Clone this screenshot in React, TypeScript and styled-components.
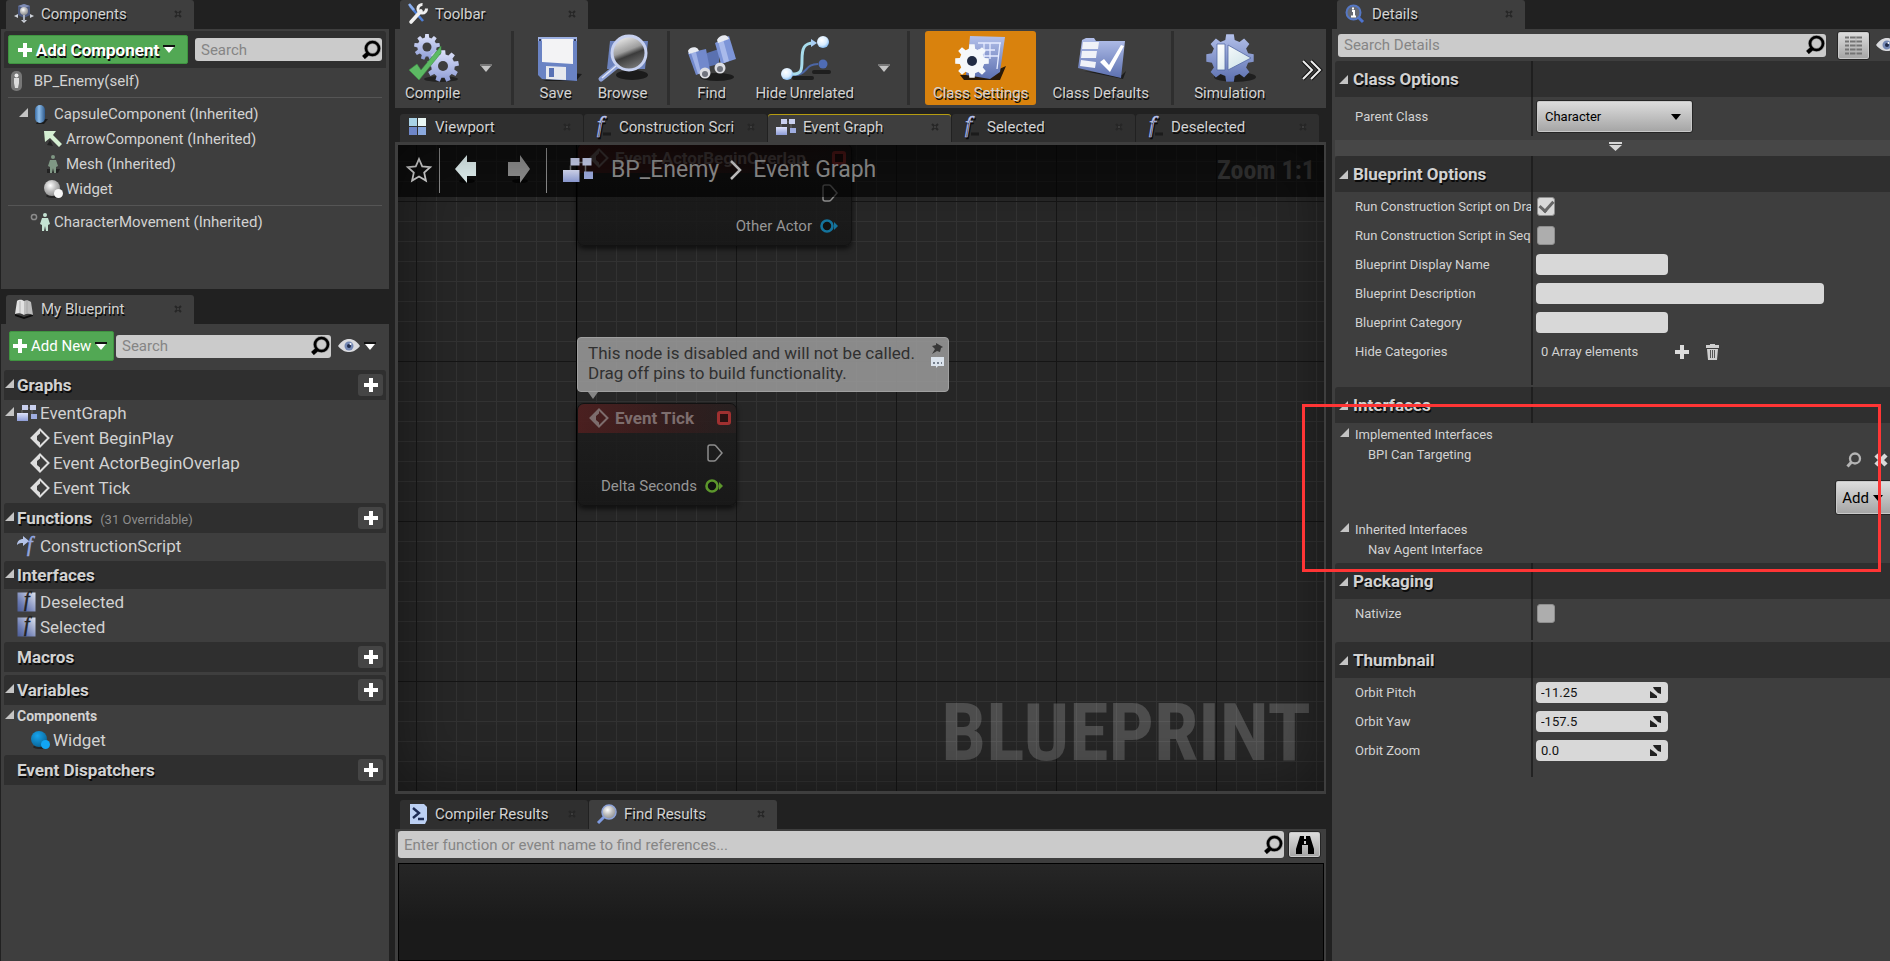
import React from 'react';
import styled, { createGlobalStyle, css } from 'styled-components';

const Global = createGlobalStyle`
  * { box-sizing: border-box; }
  body { margin: 0; background: #212121; color: #d2d2d2; overflow: hidden;
    font: 15px/20px Roboto, "Liberation Sans", sans-serif; }
  button, input, select { font: inherit; color: inherit; margin: 0; border: 0; padding: 0; background: none; outline: none; }
  ul { list-style: none; margin: 0; padding: 0; }
  h2, h3 { margin: 0; font: inherit; }
  svg { display: block; flex: none; overflow: visible; }
`;

const shadow = css`text-shadow: 1px 2px 0 #0a0a0a;`;

/* ---------- layout ---------- */

const Editor = styled.main`
  display: grid;
  grid-template-columns: 388px minmax(0, 1fr) 558px;
  column-gap: 6px;
  height: 100vh;
  padding-left: 1px;
  overflow: hidden;
`;
const Column = styled.div`
  display: flex;
  flex-direction: column;
  min-width: 0;
  min-height: 0;
`;
const Panel = styled.section<{ $grow?: boolean }>`
  background: #3e3e3e;
  padding: 0 3px;
  ${(p) => p.$grow && 'flex: 1;'}
`;
const ComponentsPanel = styled(Panel)`
  height: 260px;
  padding-top: 2px;
  margin-bottom: 6px;
`;

/* ---------- tabs ---------- */

const TabStrip = styled.div`
  display: flex;
  flex: none;
  gap: 1px;
  padding: 0 5px;
  background: #212121;
`;
const BottomStrip = styled(TabStrip)`
  margin-top: 6px;
`;
const TabButton = styled.button<{ $dim?: boolean; $marked?: boolean; $doc?: boolean }>`
  display: flex;
  align-items: center;
  gap: 7px;
  width: ${(p) => (p.$doc ? 183 : 188)}px;
  height: ${(p) => (p.$doc ? 28 : 29)}px;
  padding: 0 12px 2px 8px;
  border-radius: 3px 3px 0 0;
  background: ${(p) => (p.$dim ? '#2f2f2f' : '#3e3e3e')};
  ${(p) => p.$marked && 'box-shadow: inset 0 1px 0 #b59c10;'}
  text-align: left;
  ${shadow}
`;
const TabLabel = styled.span`
  flex: 1;
  min-width: 0;
  white-space: nowrap;
`;

/* ---------- shared controls ---------- */

const SearchBox = styled.label<{ $tall?: boolean }>`
  display: flex;
  align-items: center;
  flex: 1;
  min-width: 0;
  height: ${(p) => (p.$tall ? 27 : 23)}px;
  padding: 0 1px 0 6px;
  border-radius: 3px;
  background: #cbcbcb;
  input { flex: 1; min-width: 0; color: #111; }
  input::placeholder { color: #858585; opacity: 1; }
`;
const GreenButton = styled.button<{ $wide?: boolean }>`
  display: flex;
  align-items: center;
  justify-content: ${(p) => (p.$wide ? 'center' : 'space-between')};
  gap: 4px;
  flex: none;
  width: ${(p) => (p.$wide ? 180 : 105)}px;
  height: ${(p) => (p.$wide ? 29 : 30)}px;
  padding: 0 6px 0 3px;
  border: 1px solid #3f9440;
  border-radius: 2px;
  background: #52a854;
  color: #fff;
  white-space: nowrap;
  ${(p) => p.$wide && css`font-size: 17px; font-weight: 700; ${shadow}`}
`;
const GreyButton = styled.button<{ $short?: boolean }>`
  display: flex;
  align-items: center;
  justify-content: center;
  flex: none;
  width: 33px;
  height: ${(p) => (p.$short ? 27 : 29)}px;
  border: 1px solid #252525;
  border-radius: 3px;
  background: linear-gradient(#dedede, #a4a4a4);
  box-shadow: inset 0 0 0 1px #c9c9c9;
  color: #000;
`;
const IconButton = styled.button`
  display: flex;
  align-items: center;
  justify-content: center;
  flex: none;
`;

/* ---------- left column ---------- */

const AddBar = styled.div`
  display: flex;
  align-items: center;
  gap: 7px;
  height: 37px;
  padding: 0 4px;
  border-radius: 3px 3px 0 0;
  background: #2f2f2f;
`;
const BlueprintBar = styled.div`
  display: flex;
  align-items: center;
  gap: 2px;
  padding: 7px 10px 9px 5px;
`;
const EyeMenu = styled(IconButton)`
  gap: 4px;
  padding-left: 5px;
`;
const Rule = styled.li`
  height: 1px;
  margin: 4px 4px 3px;
  background: #555;
`;
const Row = styled.li<{ $indent: number; $large?: boolean; $bold?: boolean }>`
  display: flex;
  align-items: center;
  gap: 3px;
  height: ${(p) => (p.$bold ? 22 : 25)}px;
  padding-left: ${(p) => p.$indent}px;
  white-space: nowrap;
  ${(p) => p.$large && 'font-size: 17px;'}
  ${(p) => p.$bold && 'font-size: 14px; font-weight: 700; gap: 0;'}
`;
const Caret = styled.span`
  width: 12px;
  flex: none;
  padding-bottom: 3px;
`;
const RowCaret = styled(Caret)`
  margin-right: -3px;
`;
const GroupHead = styled.header<{ $short?: boolean }>`
  display: flex;
  align-items: center;
  height: ${(p) => (p.$short ? 28 : 30)}px;
  padding: 0 3px 0 1px;
  border-radius: 3px 3px 0 0;
  background: #2f2f2f;
  h3 { font-size: 17px; font-weight: 700; ${shadow} }
  h3:first-child { margin-left: 12px; }
  small { flex: 1; padding: 3px 0 0 8px; font-size: 13px; color: #8d8d8d; }
`;
const AddButton = styled(IconButton)`
  width: 25px;
  height: 22px;
  margin-left: auto;
  border-radius: 3px;
  background: #454545;
`;
const Group = styled.section`
  margin-bottom: 3px;
`;

/* ---------- toolbar ---------- */

const ToolbarBox = styled.div`
  display: flex;
  flex: none;
  height: 79px;
  padding-top: 2px;
  margin-bottom: 6px;
  background: #3e3e3e;
`;
const ToolGroup = styled.div<{ $start: number; $end?: number; $gap?: number }>`
  display: flex;
  height: 74px;
  gap: ${(p) => p.$gap ?? 0}px;
  padding: 0 ${(p) => p.$end ?? 0}px 0 ${(p) => p.$start}px;
  & + & { border-left: 3px solid #2e2e2e; }
`;
const ToolButton = styled.button<{ $active?: boolean; $wide?: boolean }>`
  display: flex;
  flex-direction: column;
  align-items: center;
  min-width: ${(p) => (p.$wide ? 111 : 67)}px;
  padding: 2px 6px 0;
  border-radius: 3px;
  line-height: 20px;
  white-space: nowrap;
  background: ${(p) => (p.$active ? '#d9820d' : 'none')};
  ${shadow}
`;
const ToolCaret = styled(IconButton)`
  width: 40px;
`;
const MoreButton = styled(IconButton)`
  width: 28px;
  margin-left: auto;
`;

/* ---------- graph ---------- */

const GraphFrame = styled.section`
  flex: 1;
  min-height: 0;
  display: flex;
  padding: 3px 2px 3px 3px;
  background: #3e3e3e;
`;
const Canvas = styled.div`
  position: relative;
  flex: 1;
  overflow: hidden;
  background:
    linear-gradient(#000, #000) 178px 0 / 1px 100% no-repeat,
    linear-gradient(90deg, #151515 1px, transparent 1px) 18px 56px / 160px 160px,
    linear-gradient(#151515 1px, transparent 1px) 18px 56px / 160px 160px,
    linear-gradient(90deg, #323232 1px, transparent 1px) 18px 16px / 20px 20px,
    linear-gradient(#323232 1px, transparent 1px) 18px 16px / 20px 20px,
    #262626;
  &::after {
    content: '';
    position: absolute;
    inset: 0;
    box-shadow: inset 0 0 60px rgba(0, 0, 0, 0.45);
    pointer-events: none;
  }
`;
const GraphTitle = styled.header`
  position: absolute;
  inset: 0 0 auto 0;
  display: flex;
  align-items: center;
  height: 52px;
  padding: 0 9px 2px;
  background: rgba(0, 0, 0, 0.62);
  font-size: 23px;
  color: #8c8c8c;
`;
const TitleRule = styled.span`
  width: 1px;
  height: 45px;
  background: #8a8a8a;
`;
const StarButton = styled(IconButton)`
  width: 24px;
  margin-right: 8px;
`;
const NavButton = styled(IconButton)`
  width: 53px;
  padding-right: 2px;
`;
const Crumbs = styled.nav`
  display: flex;
  align-items: center;
  gap: 11px;
  padding-left: 16px;
  svg:first-child { margin-right: 7px; }
`;
const ZoomText = styled.span`
  margin-left: auto;
  font: 700 26px/32px "Roboto Condensed", Roboto, sans-serif;
  color: #303030;
`;
const Watermark = styled.span`
  position: absolute;
  right: 13px;
  bottom: 18px;
  font: 700 80px/80px "Roboto Condensed", Roboto, sans-serif;
  color: rgba(255, 255, 255, 0.18);
`;
const Node = styled.article<{ $x: number; $y: number; $w: number }>`
  position: absolute;
  left: ${(p) => p.$x}px;
  top: ${(p) => p.$y}px;
  width: ${(p) => p.$w}px;
  height: 103px;
  border: 1px solid #121212;
  border-radius: 7px;
  background: linear-gradient(rgba(30, 30, 30, 0.85), rgba(22, 22, 22, 0.85));
  box-shadow: 0 3px 5px rgba(0, 0, 0, 0.6);
  color: #969696;
  overflow: hidden;
`;
const NodeHead = styled.header`
  display: flex;
  align-items: center;
  gap: 6px;
  height: 29px;
  padding: 0 5px 2px 11px;
  background: linear-gradient(90deg, rgba(104, 32, 32, 0.6), rgba(80, 28, 28, 0.4) 60%, rgba(50, 34, 34, 0.4));
  font-size: 17px;
  font-weight: 700;
  color: #7d6d6d;
  svg:last-child { margin-left: auto; }
`;
const NodePin = styled.div`
  display: flex;
  align-items: center;
  justify-content: flex-end;
  gap: 8px;
  height: 33px;
  margin-top: 3px;
  padding-right: 13px;
  & + & { margin-top: 0; }
`;
const Comment = styled.p`
  position: absolute;
  left: 179px;
  top: 192px;
  display: flex;
  justify-content: space-between;
  width: 372px;
  height: 55px;
  margin: 0;
  padding: 5px 4px 0 10px;
  border-radius: 4px;
  border: 1px solid #a0a0a0;
  background: rgba(150, 150, 150, 0.9);
  font-size: 17px;
  color: #303030;
  &::after {
    content: '';
    position: absolute;
    left: 10px;
    top: 54px;
    border: 5px solid transparent;
    border-top: 7px solid #868686;
    border-bottom: 0;
  }
`;
const CommentIcons = styled.span`
  display: grid;
  gap: 2px;
  align-content: start;
`;

/* ---------- find results ---------- */

const ResultsPanel = styled.section`
  display: flex;
  flex-direction: column;
  flex: none;
  height: 132px;
  padding: 2px 2px 0 3px;
  background: #3e3e3e;
`;
const ResultsBar = styled.div`
  display: flex;
  gap: 4px;
  padding-right: 3px;
  margin-bottom: 5px;
`;
const ResultsList = styled.div`
  flex: 1;
  border: 1px solid #000;
  background: linear-gradient(#262626, #1a1a1a 60%);
`;

/* ---------- details ---------- */

const DetailsPanel = styled(Panel)`
  padding-right: 0;
`;
const DetailsBar = styled.div`
  display: flex;
  align-items: center;
  height: 32px;
  padding-left: 3px;
  gap: 6px;
  label { margin-right: 5px; }
`;
const EyeButton = styled(IconButton)`
  margin-right: -8px;
`;
const Section = styled.section<{ $full?: boolean; $gap?: number }>`
  margin-bottom: ${(p) => p.$gap ?? 2}px;
  background: linear-gradient(#232323, #232323) 196px 0 / 2px ${(p) => (p.$full ? '100%' : '0')} no-repeat;
`;
const InterfacesSection = styled(Section)`
  position: relative;
  z-index: 1;
`;
const SectionHead = styled.h2`
  display: flex;
  align-items: center;
  gap: 5px;
  height: 36px;
  padding-left: 4px;
  border-radius: 3px 0 0 0;
  background: linear-gradient(#1f1f1f, #1f1f1f) 196px 0 / 2px 100% no-repeat #2f2f2f;
  font-size: 17px;
  font-weight: 700;
  ${shadow}
`;
const SectionBody = styled.div<{ $pad?: number }>`
  padding-bottom: ${(p) => p.$pad ?? 12}px;
  font-size: 13px;
`;
const Field = styled.div<{ $tall?: boolean }>`
  display: grid;
  grid-template-columns: 196px minmax(0, 1fr);
  align-items: center;
  height: ${(p) => (p.$tall ? 39 : 29)}px;
  column-gap: 5px;
`;
const FieldName = styled.label`
  padding-left: 20px;
  overflow: hidden;
  white-space: nowrap;
`;
const SelectBox = styled.span`
  display: grid;
  align-items: center;
  width: 157px;
  height: 33px;
  border: 1px solid #252525;
  border-radius: 3px;
  background: linear-gradient(#dedede, #a4a4a4);
  box-shadow: inset 0 0 0 1px #c9c9c9;
  color: #000;
  select, svg { grid-area: 1 / 1; }
  select { appearance: none; height: 31px; padding-left: 8px; }
  svg { justify-self: end; margin-right: 11px; pointer-events: none; }
`;
const Check = styled.input`
  appearance: none;
  display: grid;
  place-items: center;
  width: 18px;
  height: 19px;
  margin-left: 1px;
  border: 1px solid #8e8e8e;
  border-radius: 3px;
  background: #adadad;
  &:checked { background: #d8d8d8; }
  &:checked::after {
    content: '';
    width: 6px;
    height: 11px;
    margin-bottom: 3px;
    border: solid #666;
    border-width: 0 3px 3px 0;
    transform: rotate(42deg);
  }
`;
const ValueBox = styled.span<{ $wide?: boolean }>`
  display: flex;
  align-items: center;
  width: ${(p) => (p.$wide ? 288 : 132)}px;
  height: 21px;
  padding: 0 7px 0 5px;
  border-radius: 4px;
  background: #d8d8d8;
  color: #111;
  input { flex: 1; min-width: 0; }
`;
const ArrayValue = styled.span`
  display: flex;
  align-items: center;
  padding-left: 5px;
  span { width: 134px; }
  button { margin-right: 17px; }
`;
const MoreBar = styled.button`
  display: flex;
  justify-content: center;
  width: 100%;
  height: 16px;
  padding: 2px 0 0 6px;
  background: #474747;
`;
const InterfaceGroup = styled.div<{ $pad: number }>`
  padding-bottom: ${(p) => p.$pad}px;
  h3 { display: flex; align-items: center; gap: 6px; height: 22px; padding: 1px 0 0 5px; }
  h3 svg { margin-bottom: 4px; }
`;
const InterfaceRow = styled.div<{ $tall?: boolean }>`
  display: flex;
  gap: 12px;
  height: ${(p) => (p.$tall ? 30 : 21)}px;
  padding: 0 2px 0 33px;
  span { flex: 1; }
  button { align-self: center; }
`;
const AddInterface = styled(GreyButton)`
  width: 63px;
  height: 35px;
  gap: 4px;
  margin: 5px -8px 0 auto;
  padding-right: 8px;
  font-size: 15px;
`;
const Highlight = styled.div`
  position: absolute;
  top: 17px;
  left: -33px;
  right: 9px;
  height: 168px;
  border: 3px solid #ff3535;
  pointer-events: none;
`;

/* ---------- icons ---------- */

const gear = (cx: number, cy: number, r: number, teeth: number, inner = 0.74) => {
  const pts: string[] = [];
  const step = (Math.PI * 2) / teeth;
  for (let i = 0; i < teeth; i++) {
    const a = i * step - Math.PI / 2;
    [[-0.32, inner], [-0.2, 1], [0.2, 1], [0.32, inner]].forEach(([o, k]) =>
      pts.push(`${(cx + Math.cos(a + o * step) * r * k).toFixed(1)},${(cy + Math.sin(a + o * step) * r * k).toFixed(1)}`));
  }
  return pts.join(' ');
};

const HiddenSvg = styled.svg`
  position: absolute;
`;
const Defs = () => (
  <HiddenSvg width="0" height="0" aria-hidden="true">
    <defs>
      <linearGradient id="blue" x1="0" y1="0" x2="0" y2="1"><stop offset="0" stopColor="#b3c0ea" /><stop offset="1" stopColor="#5c70b0" /></linearGradient>
      <linearGradient id="tile" x1="1" y1="0" x2="0" y2="1"><stop offset="0" stopColor="#dfe4ee" /><stop offset="0.7" stopColor="#6a7ab2" /><stop offset="1" stopColor="#4c5c96" /></linearGradient>
      <linearGradient id="pale" x1="0" y1="0" x2="0" y2="1"><stop offset="0" stopColor="#dde2fa" /><stop offset="1" stopColor="#8d9cd6" /></linearGradient>
      <linearGradient id="white" x1="0" y1="0" x2="1" y2="1"><stop offset="0" stopColor="#ffffff" /><stop offset="1" stopColor="#c9dfe6" /></linearGradient>
      <linearGradient id="lens" x1="0.2" y1="0" x2="0.6" y2="1"><stop offset="0" stopColor="#f4f4f4" /><stop offset="0.45" stopColor="#9d9d9d" /><stop offset="0.6" stopColor="#3b3b3b" /><stop offset="1" stopColor="#7a7a7a" /></linearGradient>
      <linearGradient id="capsule" x1="0" y1="0" x2="1" y2="0"><stop offset="0" stopColor="#3b6ea6" /><stop offset="0.4" stopColor="#8dbdea" /><stop offset="1" stopColor="#2f5a8c" /></linearGradient>
      <radialGradient id="ball" cx="0.4" cy="0.35" r="0.7"><stop offset="0" stopColor="#fff" /><stop offset="0.5" stopColor="#bdbdbd" /><stop offset="1" stopColor="#8b8b8b" /></radialGradient>
      <radialGradient id="ice" cx="0.4" cy="0.35" r="0.7"><stop offset="0" stopColor="#fff" /><stop offset="0.6" stopColor="#d8ecff" /><stop offset="1" stopColor="#79b4ee" /></radialGradient>
      <radialGradient id="azure" cx="0.4" cy="0.3" r="0.7"><stop offset="0" stopColor="#18a4ec" /><stop offset="1" stopColor="#0a679b" /></radialGradient>
    </defs>
  </HiddenSvg>
);

const Magnifier = () => (
  <svg width="20" height="20" viewBox="0 0 20 20" fill="none">
    <circle cx="11.5" cy="8.5" r="6.5" stroke="#8f8f8f" strokeWidth="4" />
    <path d="M7.500 13 2.500 17.500" stroke="#8f8f8f" strokeWidth="5" />
    <circle cx="11.5" cy="8.5" r="6.5" stroke="#000" strokeWidth="2.6" />
    <path d="M7.5 13 2.500 17.500" stroke="#000" strokeWidth="3.800" />
  </svg>
);
const Plus = ({ size = 14, color = '#fff' }: { size?: number; color?: string }) => (
  <svg width={size} height={size} viewBox="0 0 14 14"><path d="M5 0h4v5h5v4H9v5H5V9H0V5h5z" fill={color} /></svg>
);
const Down = ({ color = '#fff', edge = '#111' }: { color?: string; edge?: string }) => (
  <svg width="12" height="9" viewBox="0 0 12 9"><path d="M0 0h12v2H0z" fill={edge} /><path d="M1 2h10L6 8z" fill={color} /></svg>
);
const Corner = () => <svg width="9" height="9" viewBox="0 0 9 9"><path d="M9 0v9H0z" fill="#c4c4c4" /></svg>;
const Close = () => (
  <svg width="8" height="8" viewBox="0 0 8 8"><path d="M1 1l6 6M7 1 1 7" stroke="#262626" strokeWidth="2" /><path d="M4 3v2" stroke="#555" /></svg>
);
const Eye = () => (
  <svg width="22" height="14" viewBox="0 0 22 14">
    <path d="M0 7C4 1 8 0 11 0s7 1 11 7c-4 5-8 6-11 6S4 12 0 7z" fill="#d9dade" />
    <circle cx="11" cy="7" r="4.5" fill="#7488b4" /><circle cx="11" cy="7" r="2" fill="#1e2a4a" /><circle cx="12.5" cy="5" r="1" fill="#fff" />
  </svg>
);
const ComponentsIcon = () => (
  <svg width="20" height="20" viewBox="0 0 20 20">
    <path d="M0 12l4-2v4zM20 12l-4-2v4zM10 19l-3-3h6z" fill="#cfd3da" />
    <path d="M4 2l6-2 6 2v9l-6 3-6-3z" fill="#4d5a80" /><path d="M4 2l6 2 6-2-6-2z" fill="#7f8cb4" />
    <circle cx="10" cy="7" r="4" fill="url(#ball)" /><path d="M9 11h2v6H9z" fill="#aab0bb" />
  </svg>
);
const BookIcon = () => (
  <svg width="20" height="20" viewBox="0 0 20 20">
    <path d="M1 15l9 3 9-3v2l-9 3-9-3z" fill="#0e0e0e" />
    <path d="M3 2c3-2 5-1 7 0v14c-3-2-6-2-9-1z" fill="#e2e2e2" /><path d="M17 3c-3-2-5-2-7-1v14c3-2 6-1 9 0z" fill="#bdbdbd" />
    <path d="M6 2v12M13 2v12" stroke="#9d9d9d" strokeWidth="0.7" />
  </svg>
);
const WrenchIcon = () => (
  <svg width="20" height="20" viewBox="0 0 20 20" fill="none">
    <path d="M2 2l13 15" stroke="#4e7fd6" strokeWidth="2.6" /><path d="M1 0l5 6" stroke="#8db0ee" strokeWidth="2.6" />
    <path d="M3 18 13 7" stroke="#f0f0f0" strokeWidth="3.6" strokeLinecap="round" />
    <path d="M18.500 4.500a4.300 4.300 0 1 1-4-4" stroke="#f0f0f0" strokeWidth="3" />
  </svg>
);
const WindowIcon = () => (
  <svg width="20" height="20" viewBox="0 0 20 20">
    <path d="M1 1h8v8H1z" fill="#a9d2e6" /><path d="M10 1h8v8h-8z" fill="#e9f6f4" /><path d="M1 10h8v8H1z" fill="#6e86c8" /><path d="M10 10h8v8h-8z" fill="#8ba9de" />
  </svg>
);
const FnIcon = () => (
  <svg width="20" height="20" viewBox="0 0 20 20"><path d="M11 17h8" stroke="#1b1b1b" strokeWidth="3" />
    <text x="5" y="15" fontFamily="Liberation Serif, serif" fontStyle="italic" fontSize="24" fill="url(#pale)" stroke="#aab6e6" strokeWidth="0.6">f</text></svg>
);
const GraphIcon = ({ size = 20 }: { size?: number }) => (
  <svg width={size} height={size * 0.8} viewBox="0 0 20 16">
    <path d="M8 3h7M15 3v9M5 5v7" stroke="#6b6b6b" /><path d="M5 0h6v5H5zM13 0h6v5h-6z" fill="#c9d0ee" /><path d="M0 8h11v8H0z" fill="url(#pale)" /><path d="M14 9h6v5h-6z" fill="#9eace0" />
  </svg>
);
const InfoIcon = () => (
  <svg width="20" height="20" viewBox="0 0 20 20" fill="none">
    <path d="M13 13l5 5" stroke="#4d73d0" strokeWidth="3" /><circle cx="8.5" cy="8.5" r="7" fill="#666a73" stroke="#5577c4" strokeWidth="2" />
    <path d="M7 7h2v5M6 12.500h5M8 3.500v2" stroke="#fff" strokeWidth="2" />
  </svg>
);
const CompilerIcon = () => (
  <svg width="20" height="20" viewBox="0 0 20 20"><path d="M2 0h14l3 3v13l-2 4H2z" fill="#bcd0f3" /><path d="M5 4l6 5-6 5M10 15h6" fill="none" stroke="#1d2c55" strokeWidth="2.4" /></svg>
);
const LensIcon = () => (
  <svg width="20" height="20" viewBox="0 0 20 20"><path d="M7 13l-6 6" stroke="#7f9be0" strokeWidth="3" /><circle cx="12" cy="8" r="7" fill="url(#ball)" stroke="#8ea3d8" strokeWidth="1.5" /></svg>
);
const Person = ({ color }: { color: string }) => (
  <g fill={color}><circle cx="10" cy="3" r="2" /><path d="M7 6h6l2 6-2 1v6h-2l-1-5-1 5H7v-6l-2-1z" /></g>
);
const ActorIcon = () => (
  <svg width="20" height="20" viewBox="0 0 20 20"><rect x="4" y="0" width="11" height="20" rx="5" fill="#777" /><circle cx="9.500" cy="4.500" r="2" fill="#eee" /><path d="M7 7h5v5l-1 5H8l-1-5z" fill="#dcdcdc" /></svg>
);
const CapsuleIcon = () => (
  <svg width="20" height="20" viewBox="0 0 20 20"><path d="M8 15h9l-4 5H5z" fill="#1c1c1c" /><rect x="4" y="1" width="10" height="18" rx="5" fill="url(#capsule)" /></svg>
);
const ArrowIcon = () => (
  <svg width="20" height="20" viewBox="0 0 20 20"><path d="M4 16l6 1-3-6z" fill="#222" /><path d="M1 2h12L10 6l9 9-3 3-9-9-5 4z" fill="#d5efd3" /></svg>
);
const MeshIcon = () => <svg width="20" height="20" viewBox="0 0 20 20"><path d="M4 15h13l-2 4H4z" fill="#222" /><Person color="#7f9784" /></svg>;
const MoveIcon = () => (
  <svg width="20" height="20" viewBox="0 0 20 20"><circle cx="3" cy="5" r="2.6" fill="none" stroke="#8b8b8b" strokeWidth="1.5" /><g transform="translate(4 0)"><Person color="#c4e2d2" /></g></svg>
);
const WidgetIcon = ({ blue }: { blue?: boolean }) => (
  <svg width="20" height="20" viewBox="0 0 20 20"><ellipse cx="11" cy="17" rx="8" ry="2" fill="#252525" /><circle cx="9" cy="9" r="8" fill={blue ? 'url(#azure)' : 'url(#ball)'} /><circle cx="15.500" cy="14.500" r="4.500" fill={blue ? '#12a5f4' : '#f6f6f6'} /></svg>
);
const EventIcon = ({ color = '#dedede' }: { color?: string }) => (
  <svg width="20" height="20" viewBox="0 0 20 20"><path d="M10 1.500 18.500 10 10 18.500 1.500 10z" fill="none" stroke={color} strokeWidth="2" /><path d="M10 1.500v4L7 8v4l3 2.500v4L1.500 10z" fill={color} /></svg>
);
const ScriptIcon = () => (
  <svg width="20" height="20" viewBox="0 0 20 20"><path d="M0 9c0-4 3-6 6-6V0l6 5-6 5V7C4 7 2 7 0 9z" fill="#b4c3e8" /><text x="10" y="15" fontFamily="Liberation Serif, serif" fontStyle="italic" fontSize="20" fill="#93a5de" stroke="#93a5de" strokeWidth="0.6">f</text></svg>
);
const InterfaceIcon = () => (
  <svg width="20" height="20" viewBox="0 0 20 20"><rect x="0.500" y="0.500" width="18" height="19" fill="url(#tile)" /><text x="7" y="14" fontFamily="Liberation Serif, serif" fontStyle="italic" fontSize="20" fill="#222" stroke="#222" strokeWidth="0.5">f</text></svg>
);
const CompileIcon = () => (
  <svg width="50" height="50" viewBox="0 0 50 50"><ellipse cx="33" cy="46" rx="17" ry="3" fill="#222" />
    <polygon points={gear(19, 14, 13, 9)} fill="url(#pale)" /><circle cx="19" cy="14" r="4.500" fill="#3e3e3e" />
    <polygon points={gear(35, 33, 16, 9)} fill="url(#pale)" /><circle cx="35" cy="33" r="5" fill="#3e3e3e" />
    <path d="M1 37l8-6 4 6 20-24v7L11 47z" fill="#5cba63" stroke="#3f8c47" strokeWidth="0.6" /></svg>
);
const SaveIcon = () => (
  <svg width="50" height="50" viewBox="0 0 50 50"><path d="M40 40l11 1-6 7H12z" fill="#1c1c1c" /><path d="M7 4h39v44L11 46l-4-4z" fill="#6a83c4" /><path d="M7 4h39v4H7z" fill="#9cb0e2" />
    <path d="M11 6h31v25l-31-2z" fill="#f3f3f5" /><path d="M15 33l20 1v13l-20-1z" fill="#e6e8ee" /><path d="M18 35h5v9h-5z" fill="#5871b5" /><path d="M8 6h2v2H8zM43 6h2v2h-2z" fill="#333c5e" /></svg>
);
const BrowseIcon = () => (
  <svg width="50" height="50" viewBox="0 0 50 50"><ellipse cx="34" cy="42" rx="16" ry="5" fill="#1b1b1b" /><path d="M12 8h38l-3 28H9z" fill="#6c82bd" /><path d="M19 33 3 46" stroke="#8c9fd4" strokeWidth="5" strokeLinecap="round" /><path d="M18 33 4 45" stroke="#dfe5f8" strokeWidth="1.500" />
    <circle cx="31" cy="20" r="17" fill="url(#lens)" stroke="#c7d1f0" strokeWidth="3" /></svg>
);
const FindIcon = () => (
  <svg width="50" height="50" viewBox="0 0 50 50"><ellipse cx="30" cy="44" rx="17" ry="4" fill="#1c1c1c" />
    <path d="M20 20l12-4v15l-12 3z" fill="#5a71b0" /><path d="M1 20l18-4 4 21-14 5z" fill="#7289cc" /><path d="M28 10l14-7 7 23-15 5z" fill="#7d95d8" /><path d="M31 8l5-2 6 22-5 2z" fill="#a9baeb" /><path d="M4 20l5-1 5 21-3 1z" fill="#9fb1e6" />
    <path d="M1 18c1-4 8-5 10-2l1 2-10 3zM30 7c2-5 9-6 11-3l1 2-11 4z" fill="#e8ebf2" />
    <circle cx="18" cy="40" r="5.500" fill="#dcdde2" /><circle cx="18" cy="41" r="3" fill="#70737d" /><circle cx="33" cy="35" r="5.500" fill="#dcdde2" /><circle cx="33" cy="36" r="3" fill="#70737d" /></svg>
);
const RelatedIcon = () => (
  <svg width="50" height="50" viewBox="0 0 50 50" fill="none"><path d="M14 45h18M34 39h15" stroke="#1f1f1f" strokeWidth="4" strokeLinecap="round" /><path d="M12 42c16 1 12-11 26-11" stroke="#4c66a5" strokeWidth="2" /><circle cx="43" cy="31" r="4.500" fill="#4f6cb4" />
    <path d="M10 41c12 1 12-4 12-14 0-12 2-17 12-17" stroke="#a8dcec" strokeWidth="3" /><path d="M31 6l6 4-6 4z" fill="#a8cdf3" /><circle cx="43" cy="9" r="6" fill="url(#ice)" /><circle cx="7" cy="41" r="6" fill="url(#ice)" /></svg>
);
const SettingsIcon = () => (
  <svg width="50" height="50" viewBox="0 0 50 50"><path d="M30 42l20-9-6 14H8l-4-5z" fill="#2a1a08" /><path d="M14 3l35 1-5 35-10 7-24-4z" fill="url(#blue)" /><path d="M22 10h23M22 17h17M28 10v16M34 10v16M44 10l-3 26M28 23h14" stroke="#e6ecff" strokeWidth="1.300" fill="none" />
    <polygon points={gear(16, 28, 17, 8)} fill="#f5f8fb" /><circle cx="16" cy="28" r="5" fill="#222c44" /></svg>
);
const DefaultsIcon = () => (
  <svg width="50" height="50" viewBox="0 0 50 50"><path d="M8 38l38 4 4-4-3 8z" fill="#1c1c1c" /><path d="M10 5h8l2 3h29l-4 37-43-10 4-28z" fill="url(#blue)" /><path d="M7 9h16l-1 7H6zM6 18h15l-1 7H5zM5 27l15 2-1 6-15-2z" fill="#f0f2f8" /><path d="M24 29l4-3 5 6 12-20 3 1-14 26z" fill="#fff" /></svg>
);
const SimulationIcon = () => (
  <svg width="50" height="50" viewBox="0 0 50 50"><ellipse cx="30" cy="44" rx="21" ry="5" fill="#1f1f1f" /><polygon points={gear(25, 25, 24, 8, 0.78)} fill="url(#blue)" /><path d="M12 11h8v26h-8zM23 12l23 13-23 12z" fill="url(#white)" stroke="#5469a5" strokeWidth="0.800" /></svg>
);
const Chevrons = () => (
  <svg width="22" height="22" viewBox="0 0 22 22"><path d="M2 2l9 9-9 9M10 2l9 9-9 9" fill="none" stroke="#111" strokeWidth="4" /><path d="M2 2l9 9-9 9M10 2l9 9-9 9" fill="none" stroke="#eee" strokeWidth="2" /></svg>
);
const Star = () => (
  <svg width="24" height="24" viewBox="0 0 24 24"><path d="M12 1l3.200 7.400 8 .8-6 5.400 1.700 8L12 18.500 5.100 22.600l1.700-8-6-5.400 8-.8z" fill="none" stroke="#dcdcdc" strokeWidth="1.800" /></svg>
);
const NavArrow = ({ forward }: { forward?: boolean }) => (
  <svg width="22" height="30" viewBox="0 0 22 30"><ellipse cx="12" cy="26" rx="8" ry="2" fill="#050505" />
    <path d={forward ? 'M22 14 12 0v7H0v14h12v7z' : 'M0 14 12 0v7h9v14h-9v7z'} fill={forward ? '#8d8d8d' : '#e2f2f2'} /></svg>
);
const Crumb = () => <svg width="12" height="20" viewBox="0 0 12 20"><path d="M1 1l9 9-9 9" fill="none" stroke="#c8c8c8" strokeWidth="2.500" /></svg>;
const StopPin = () => <svg width="14" height="14" viewBox="0 0 14 14"><rect x="1.500" y="1.500" width="11" height="11" rx="1.500" fill="#2a1212" stroke="#9f3030" strokeWidth="3" /></svg>;
const ExecPin = () => <svg width="16" height="18" viewBox="0 0 16 18"><path d="M1 3q0-2 2-2h4q1 0 2 1l6 7-6 7q-1 1-2 1H3q-2 0-2-2z" fill="none" stroke="#8c8c8c" strokeWidth="1.500" /></svg>;
const DataPin = ({ color }: { color: string }) => (
  <svg width="18" height="14" viewBox="0 0 18 14"><circle cx="7" cy="7" r="5.500" fill="#111" stroke={color} strokeWidth="2.600" /><path d="M14 3l4 4-4 4z" fill={color} /></svg>
);
const Tack = () => <svg width="12" height="12" viewBox="0 0 12 12"><path d="M5 0l7 4-2 1-1 4-3-1-5 3 3-5-3-3 4-1z" fill="#383838" /></svg>;
const Bubble = () => <svg width="13" height="11" viewBox="0 0 13 11"><path d="M0 0h13v9H7L5 11V9H0z" fill="#dbe3ec" /><path d="M2 6h2M6 6h2M10 6h1" stroke="#55606e" strokeWidth="1.500" /></svg>;
const Binoculars = () => (
  <svg width="18" height="18" viewBox="0 0 18 18"><path d="M4 0h4v3h2V0h4l4 13v5h-6v-9H6v9H0v-5z" fill="#000" /><path d="M8 5h2v3H8z" fill="#ccc" /></svg>
);
const ListIcon = () => (
  <svg width="17" height="19" viewBox="0 0 17 19"><path d="M0 1.500h4M0 5.500h4M0 9.500h4M0 13.500h4M0 17.500h4M5 1.500h12M5 5.500h12M5 9.500h12M5 13.500h12M5 17.500h12" stroke="#747474" strokeWidth="2.200" /><path d="M11 0v19" stroke="#b5b5b5" /></svg>
);
const MoreIcon = () => <svg width="13" height="9" viewBox="0 0 13 9"><path d="M0 0h13v2H0zM0 3h13L6.500 9z" fill="#d6d6d6" /></svg>;
const Trash = () => (
  <svg width="13" height="16" viewBox="0 0 13 16"><path d="M4 0h5v1h4v3H0V1h4zM1 5h11l-1 11H2z" fill="#cfcfcf" /><path d="M4.500 6v8M6.500 6v8M8.500 6v8" stroke="#555" /></svg>
);
const SmallLens = () => (
  <svg width="16" height="16" viewBox="0 0 16 16" fill="none"><circle cx="9" cy="6.500" r="5" stroke="#b4b4b4" strokeWidth="2.300" /><path d="M5.500 10 1.500 14.500" stroke="#b4b4b4" strokeWidth="3" /></svg>
);
const Remove = () => <svg width="14" height="14" viewBox="0 0 14 14"><path d="M2 2l10 10M12 2 2 12" stroke="#d8d8d8" strokeWidth="4.500" /></svg>;
const Spin = () => <svg width="11" height="11" viewBox="0 0 11 11"><path d="M3 0h8v7L8 6 4 2zM0 4l3 2 4 3v2H0z" fill="#222" /></svg>;
const BlackDown = () => <svg width="10" height="6" viewBox="0 0 10 6"><path d="M0 0h10L5 6z" fill="#000" /></svg>;

/* ---------- pieces ---------- */

type TabProps = { icon: React.ReactNode; label: string; dim?: boolean; marked?: boolean; doc?: boolean };
const Tab = ({ icon, label, dim, marked, doc }: TabProps) => (
  <TabButton type="button" role="tab" $dim={dim} $marked={marked} $doc={doc}>
    {icon}<TabLabel>{label}</TabLabel><Close />
  </TabButton>
);

const Search = ({ placeholder, tall }: { placeholder: string; tall?: boolean }) => (
  <SearchBox $tall={tall}><input type="text" aria-label={placeholder} placeholder={placeholder} /><Magnifier /></SearchBox>
);

type ItemProps = { icon: React.ReactNode; indent: number; caret?: boolean; large?: boolean; children: React.ReactNode };
const Item = ({ icon, indent, caret, large, children }: ItemProps) => (
  <Row $indent={indent} $large={large}>{caret && <RowCaret><Corner /></RowCaret>}{icon}<span>{children}</span></Row>
);

type HeadProps = { title: string; caret?: boolean; add?: boolean; note?: string };
const Head = ({ title, caret, add, note }: HeadProps) => (
  <GroupHead $short={!add}>
    {caret && <Caret><Corner /></Caret>}
    <h3>{title}</h3>
    {note && <small>{note}</small>}
    {add && <AddButton type="button" aria-label={`Add to ${title}`}><Plus /></AddButton>}
  </GroupHead>
);

type ToolProps = { icon: React.ReactNode; label: string; active?: boolean; wide?: boolean };
const Tool = ({ icon, label, active, wide }: ToolProps) => (
  <ToolButton type="button" $active={active} $wide={wide}>{icon}{label}</ToolButton>
);

type FieldProps = { id: string; name: string; value?: string; wide?: boolean; spin?: boolean };
const TextField = ({ id, name, value, wide, spin }: FieldProps) => (
  <Field><FieldName htmlFor={id}>{name}</FieldName><ValueBox $wide={wide}><input id={id} type="text" defaultValue={value} />{spin && <Spin />}</ValueBox></Field>
);
const CheckField = ({ id, name, checked }: { id: string; name: string; checked?: boolean }) => (
  <Field><FieldName htmlFor={id}>{name}</FieldName><Check id={id} type="checkbox" defaultChecked={checked} /></Field>
);

const LeftColumn = () => (
  <Column>
    <TabStrip><Tab icon={<ComponentsIcon />} label="Components" /></TabStrip>
    <ComponentsPanel>
      <AddBar>
        <GreenButton type="button" $wide><Plus />Add Component<Down /></GreenButton>
        <Search placeholder="Search" />
      </AddBar>
      <ul>
        <Item icon={<ActorIcon />} indent={3}>&nbsp;BP_Enemy(self)</Item>
        <Rule />
        <Item icon={<CapsuleIcon />} indent={15} caret>CapsuleComponent (Inherited)</Item>
        <Item icon={<ArrowIcon />} indent={39}>ArrowComponent (Inherited)</Item>
        <Item icon={<MeshIcon />} indent={39}>Mesh (Inherited)</Item>
        <Item icon={<WidgetIcon />} indent={39}>Widget</Item>
        <Rule />
        <Item icon={<MoveIcon />} indent={27}>CharacterMovement (Inherited)</Item>
      </ul>
    </ComponentsPanel>
    <TabStrip><Tab icon={<BookIcon />} label="My Blueprint" /></TabStrip>
    <Panel $grow>
      <BlueprintBar>
        <GreenButton type="button"><Plus />Add New<Down /></GreenButton>
        <Search placeholder="Search" />
        <EyeMenu type="button" aria-label="View options"><Eye /><Down /></EyeMenu>
      </BlueprintBar>
      <Group>
        <Head title="Graphs" caret add />
        <ul>
          <Item icon={<GraphIcon />} indent={1} caret large>EventGraph</Item>
          <Item icon={<EventIcon />} indent={26} large>Event BeginPlay</Item>
          <Item icon={<EventIcon />} indent={26} large>Event ActorBeginOverlap</Item>
          <Item icon={<EventIcon />} indent={26} large>Event Tick</Item>
        </ul>
      </Group>
      <Group>
        <Head title="Functions" caret add note="(31 Overridable)" />
        <ul><Item icon={<ScriptIcon />} indent={13} large>ConstructionScript</Item></ul>
      </Group>
      <Group>
        <Head title="Interfaces" caret />
        <ul>
          <Item icon={<InterfaceIcon />} indent={13} large>Deselected</Item>
          <Item icon={<InterfaceIcon />} indent={13} large>Selected</Item>
        </ul>
      </Group>
      <Group><Head title="Macros" add /></Group>
      <Group>
        <Head title="Variables" caret add />
        <ul>
          <Row $indent={1} $bold><Caret><Corner /></Caret>Components</Row>
          <Item icon={<WidgetIcon blue />} indent={26} large>Widget</Item>
        </ul>
      </Group>
      <Group><Head title="Event Dispatchers" add /></Group>
    </Panel>
  </Column>
);

const MiddleColumn = () => (
  <Column>
    <TabStrip><Tab icon={<WrenchIcon />} label="Toolbar" /></TabStrip>
    <ToolbarBox>
      <ToolGroup $start={4} $end={5}>
        <Tool icon={<CompileIcon />} label="Compile" />
        <ToolCaret type="button" aria-label="Compile options"><Down color="#c4c4c4" edge="#777" /></ToolCaret>
      </ToolGroup>
      <ToolGroup $start={8} $end={11}>
        <Tool icon={<SaveIcon />} label="Save" />
        <Tool icon={<BrowseIcon />} label="Browse" />
      </ToolGroup>
      <ToolGroup $start={8} $end={3} $gap={4}>
        <Tool icon={<FindIcon />} label="Find" />
        <Tool icon={<RelatedIcon />} label="Hide Unrelated" wide />
        <ToolCaret type="button" aria-label="Hide options"><Down color="#c4c4c4" edge="#777" /></ToolCaret>
      </ToolGroup>
      <ToolGroup $start={15} $end={15} $gap={9}>
        <Tool icon={<SettingsIcon />} label="Class Settings" active wide />
        <Tool icon={<DefaultsIcon />} label="Class Defaults" wide />
      </ToolGroup>
      <ToolGroup $start={14}><Tool icon={<SimulationIcon />} label="Simulation" /></ToolGroup>
      <MoreButton type="button" aria-label="More tools"><Chevrons /></MoreButton>
    </ToolbarBox>
    <TabStrip role="tablist">
      <Tab doc dim icon={<WindowIcon />} label="Viewport" />
      <Tab doc dim icon={<FnIcon />} label="Construction Scri" />
      <Tab doc marked icon={<GraphIcon />} label="Event Graph" />
      <Tab doc dim icon={<FnIcon />} label="Selected" />
      <Tab doc dim icon={<FnIcon />} label="Deselected" />
    </TabStrip>
    <GraphFrame>
      <Canvas>
        <Node $x={179} $y={-2} $w={275}>
          <NodeHead><EventIcon color="#7d6d6d" />Event ActorBeginOverlap<StopPin /></NodeHead>
          <NodePin><ExecPin /></NodePin>
          <NodePin>Other Actor<DataPin color="#14739c" /></NodePin>
        </Node>
        <Node $x={179} $y={258} $w={160}>
          <NodeHead><EventIcon color="#7d6d6d" />Event Tick<StopPin /></NodeHead>
          <NodePin><ExecPin /></NodePin>
          <NodePin>Delta Seconds<DataPin color="#5c962c" /></NodePin>
        </Node>
        <Comment>
          <span>This node is disabled and will not be called.<br />Drag off pins to build functionality.</span>
          <CommentIcons><Tack /><Bubble /></CommentIcons>
        </Comment>
        <Watermark>BLUEPRINT</Watermark>
        <GraphTitle>
          <StarButton type="button" aria-label="Favorite"><Star /></StarButton>
          <TitleRule />
          <NavButton type="button" aria-label="Back"><NavArrow /></NavButton>
          <NavButton type="button" aria-label="Forward"><NavArrow forward /></NavButton>
          <TitleRule />
          <Crumbs><GraphIcon size={30} /><span>BP_Enemy</span><Crumb /><span>Event Graph</span></Crumbs>
          <ZoomText>Zoom 1:1</ZoomText>
        </GraphTitle>
      </Canvas>
    </GraphFrame>
    <BottomStrip role="tablist">
      <Tab dim icon={<CompilerIcon />} label="Compiler Results" />
      <Tab icon={<LensIcon />} label="Find Results" />
    </BottomStrip>
    <ResultsPanel>
      <ResultsBar>
        <Search tall placeholder="Enter function or event name to find references..." />
        <GreyButton type="button" $short aria-label="Find in all blueprints"><Binoculars /></GreyButton>
      </ResultsBar>
      <ResultsList />
    </ResultsPanel>
  </Column>
);

const Title = ({ children }: { children: string }) => <SectionHead><Corner />{children}</SectionHead>;

const RightColumn = () => (
  <Column>
    <TabStrip><Tab icon={<InfoIcon />} label="Details" /></TabStrip>
    <DetailsPanel $grow>
      <DetailsBar>
        <Search placeholder="Search Details" />
        <GreyButton type="button" aria-label="Property matrix"><ListIcon /></GreyButton>
        <EyeButton type="button" aria-label="View options"><Eye /></EyeButton>
      </DetailsBar>
      <Section $full $gap={4}>
        <Title>Class Options</Title>
        <SectionBody $pad={0}>
          <Field $tall>
            <FieldName htmlFor="parent">Parent Class</FieldName>
            <SelectBox><select id="parent"><option>Character</option></select><BlackDown /></SelectBox>
          </Field>
        </SectionBody>
      </Section>
      <MoreBar type="button" aria-label="Show advanced"><MoreIcon /></MoreBar>
      <Section $full>
        <Title>Blueprint Options</Title>
        <SectionBody $pad={19}>
          <CheckField id="drag" name="Run Construction Script on Drag" checked />
          <CheckField id="sequencer" name="Run Construction Script in Sequencer" />
          <TextField id="display" name="Blueprint Display Name" />
          <TextField id="description" name="Blueprint Description" wide />
          <TextField id="category" name="Blueprint Category" />
          <Field>
            <FieldName as="span">Hide Categories</FieldName>
            <ArrayValue>
              <span>0 Array elements</span>
              <IconButton type="button" aria-label="Add element"><Plus color="#dcdcdc" /></IconButton>
              <IconButton type="button" aria-label="Empty array"><Trash /></IconButton>
            </ArrayValue>
          </Field>
        </SectionBody>
      </Section>
      <InterfacesSection $gap={0}>
        <Title>Interfaces</Title>
        <SectionBody $pad={2}>
          <InterfaceGroup $pad={3}>
            <h3><Corner />Implemented Interfaces</h3>
            <InterfaceRow $tall>
              <span>BPI Can Targeting</span>
              <IconButton type="button" aria-label="Browse to interface"><SmallLens /></IconButton>
              <IconButton type="button" aria-label="Remove interface"><Remove /></IconButton>
            </InterfaceRow>
            <AddInterface type="button">Add<BlackDown /></AddInterface>
          </InterfaceGroup>
          <InterfaceGroup $pad={0}>
            <h3><Corner />Inherited Interfaces</h3>
            <InterfaceRow><span>Nav Agent Interface</span></InterfaceRow>
          </InterfaceGroup>
        </SectionBody>
        <Highlight />
      </InterfacesSection>
      <Section $full>
        <Title>Packaging</Title>
        <SectionBody><CheckField id="nativize" name="Nativize" /></SectionBody>
      </Section>
      <Section $full>
        <Title>Thumbnail</Title>
        <SectionBody>
          <TextField id="pitch" name="Orbit Pitch" value="-11.25" spin />
          <TextField id="yaw" name="Orbit Yaw" value="-157.5" spin />
          <TextField id="zoom" name="Orbit Zoom" value="0.0" spin />
        </SectionBody>
      </Section>
    </DetailsPanel>
  </Column>
);

export default function App() {
  return (
    <>
      <Global />
      <Defs />
      <Editor>
        <LeftColumn />
        <MiddleColumn />
        <RightColumn />
      </Editor>
    </>
  );
}
